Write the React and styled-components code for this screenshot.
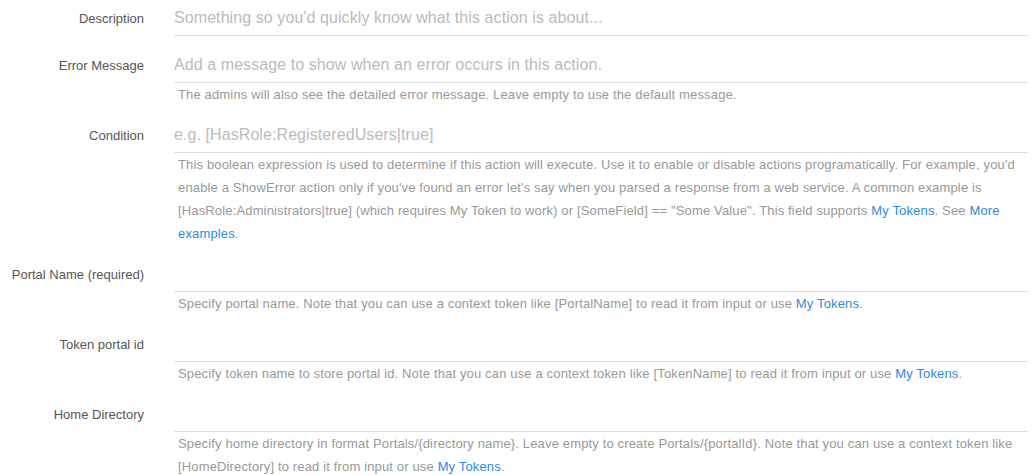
import React from "react";
import styled, { createGlobalStyle } from "styled-components";

const Global = createGlobalStyle`
  body { margin: 0; background: #fff; font-family: "Liberation Sans", Arial, sans-serif; }
`;

const Form = styled.div`
  display: flex;
  flex-direction: column;
  padding: 1px 6px 0 0;
`;

const Group = styled.div`
  display: grid;
  grid-template-columns: 144px 1fr;
  column-gap: 30px;
  margin-bottom: 12px;
`;

const Label = styled.label`
  grid-column: 1;
  height: 35px;
  display: flex;
  align-items: center;
  justify-content: flex-end;
  font-size: 13px;
  color: #555;
  white-space: nowrap;
`;

const Input = styled.input`
  grid-column: 2;
  height: 35px;
  box-sizing: border-box;
  border: none;
  border-bottom: 1px solid #ddd;
  padding: 0;
  font-family: "Liberation Sans", Arial, sans-serif;
  font-size: 16px;
  letter-spacing: 0.08px;
  color: #555;
  outline: none;
  background: transparent;
  &::placeholder { color: #bbb; }
`;

const Help = styled.div`
  grid-column: 2;
  padding: 0 0 0 4px;
  font-size: 13px;
  line-height: 23px;
  letter-spacing: 0.15px;
  color: #999;
`;

const Link = styled.a`
  color: #2b8ae6;
  text-decoration: none;
`;

const fields = [
  { label: "Description", placeholder: "Something so you'd quickly know what this action is about..." },
  {
    label: "Error Message",
    placeholder: "Add a message to show when an error occurs in this action.",
    help: <>The admins will also see the detailed error message. Leave empty to use the default message.</>,
  },
  {
    label: "Condition",
    placeholder: "e.g. [HasRole:RegisteredUsers|true]",
    help: (
      <>
        This boolean expression is used to determine if this action will execute. Use it to enable or disable actions programatically. For example, you'd enable a ShowError action only if you've found an error let's say when you parsed a response from a web service. A common example is [HasRole:Administrators|true] (which requires My Token to work) or [SomeField] == "Some Value". This field supports <Link href="#">My Tokens</Link>. See <Link href="#">More examples</Link>.
      </>
    ),
  },
  {
    label: "Portal Name (required)",
    placeholder: "",
    help: <>Specify portal name. Note that you can use a context token like [PortalName] to read it from input or use <Link href="#">My Tokens</Link>.</>,
  },
  {
    label: "Token portal id",
    placeholder: "",
    help: <>Specify token name to store portal id. Note that you can use a context token like [TokenName] to read it from input or use <Link href="#">My Tokens</Link>.</>,
  },
  {
    label: "Home Directory",
    placeholder: "",
    help: <>Specify home directory in format Portals/{"{directory name}"}. Leave empty to create Portals/{"{portalId}"}. Note that you can use a context token like [HomeDirectory] to read it from input or use <Link href="#">My Tokens</Link>.</>,
  },
];

export default function App() {
  return (
    <>
      <Global />
      <Form>
        {fields.map((f) => (
          <Group key={f.label}>
            <Label>{f.label}</Label>
            <Input placeholder={f.placeholder} />
            {f.help && <Help>{f.help}</Help>}
          </Group>
        ))}
      </Form>
    </>
  );
}
